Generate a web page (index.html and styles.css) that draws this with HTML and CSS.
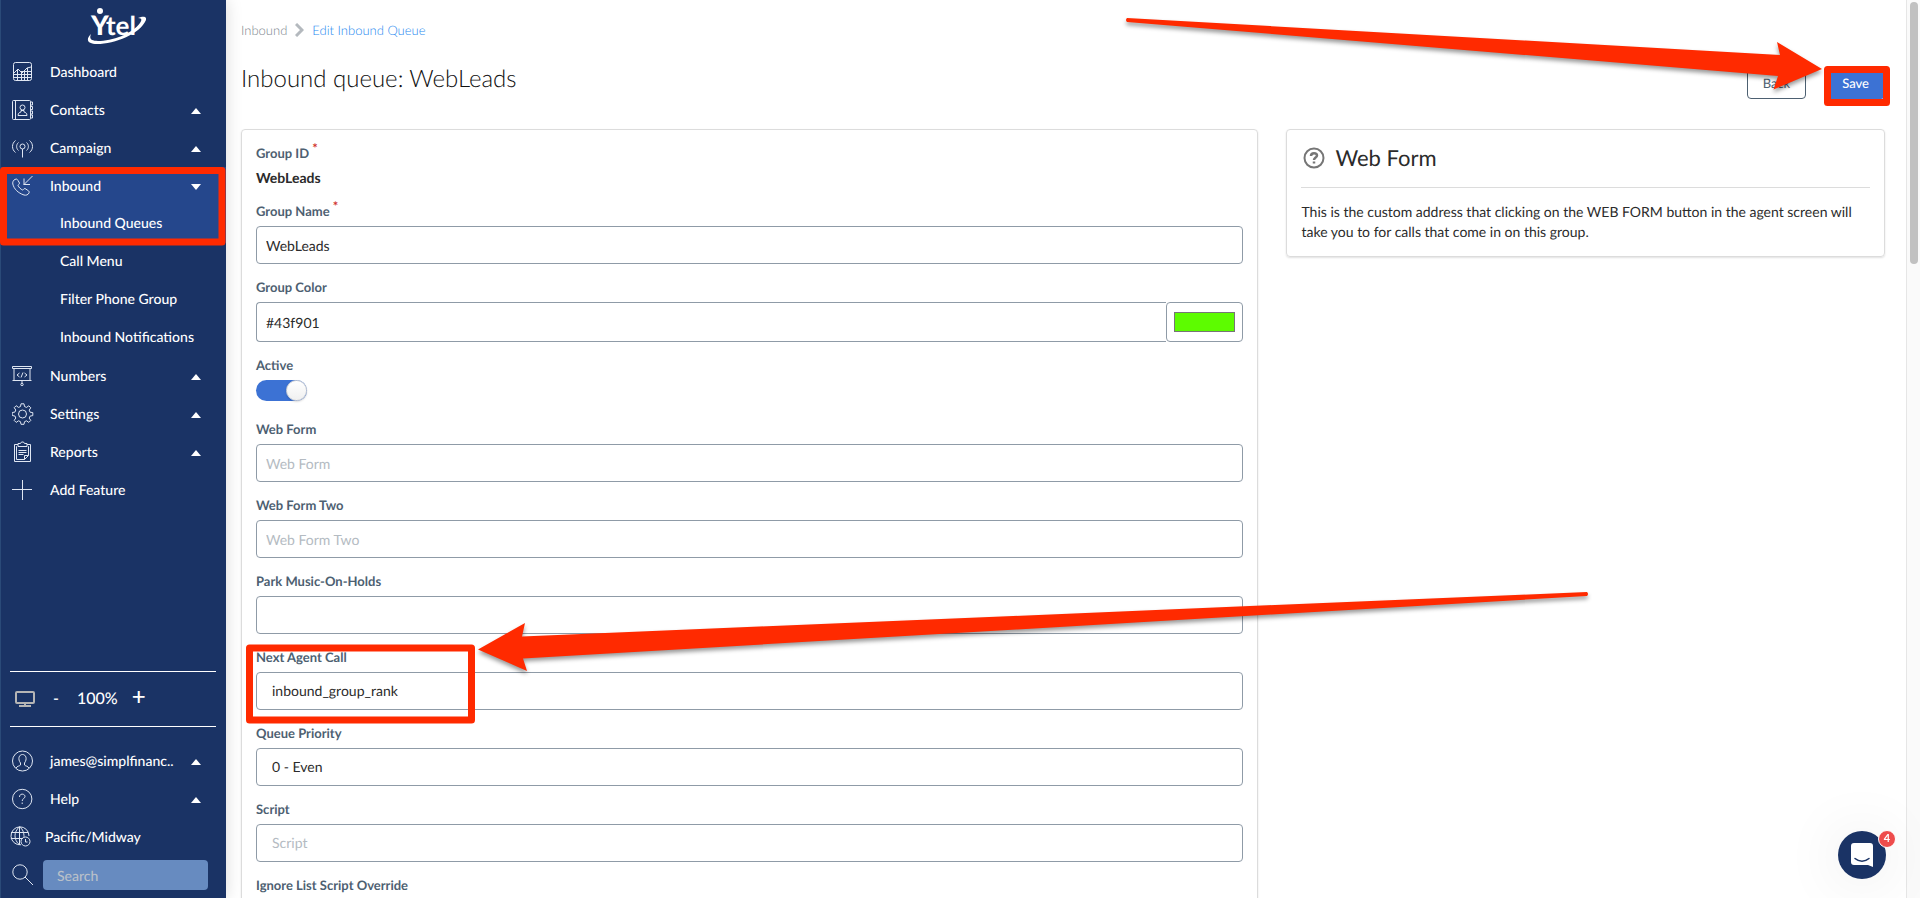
FILE: index.html
```html
<!DOCTYPE html>
<html lang="en">
<head>
    <meta charset="UTF-8">
    <meta name="viewport" content="width=device-width, initial-scale=1.0">
    <title>Edit Inbound Queue</title>
    <link rel="stylesheet" href="styles.css">
</head>
<body>
    <div class="layout">
        <aside class="sidebar">
            <a href="#" class="logo">
                <svg width="60" height="40" viewBox="0 0 60 40" fill="#fff" role="img" aria-label="Ytel">
                    <circle cx="14" cy="5" r="3"/>
                    <text x="5" y="29" font-size="27" font-weight="900">Y</text>
                    <text x="20" y="29" font-size="26" font-weight="700">tel</text>
                    <path d="M5 28c-6 6-3 10 6 10 18 0 43-10 49-24 1-3-2-4-5-3l-3 1c4 0 4 2 2 5-8 11-28 18-42 18-7 0-9-2-7-7z"/>
                </svg>
            </a>
            <nav class="menu">
                <a href="#" class="item">
                    <svg class="icon" viewBox="0 0 22 22"><rect x="1.500" y="1.500" width="18" height="18" rx="2"/><path d="M2 12l4-4 4 4 5-5 4-1M2 13.500h17M2 16.500h17M5.500 9v10M9.500 12v7M12.500 10v9M15.500 7v12M9 10.500h10"/></svg>
                    <span>Dashboard</span>
                </a>
                <a href="#" class="item">
                    <svg class="icon" viewBox="0 0 22 22"><rect x=".5" y="1.500" width="18" height="19" rx="1"/><path d="M3.500 1.500v19M18.500 3h2v3h-2M18.500 7.500h2v3h-2M18.500 12h2v3h-2M18.500 16h2v3h-2M6 16.500c0-3 2-3 3-3.500v-1.500h3V13c1 .5 3 .5 3 3.500z"/><circle cx="10.500" cy="8.500" r="2.500"/></svg>
                    <span>Contacts</span>
                    <i class="caret"></i>
                </a>
                <a href="#" class="item">
                    <svg class="icon" viewBox="0 0 22 22"><circle cx="10.500" cy="9.500" r="2.500"/><path d="M10.500 12v8.500M6.500 5.500c-2.500 2-2.500 6 0 8M14.500 5.500c2.500 2 2.500 6 0 8M3.500 3.500c-4 3-4 9 0 12M17.500 3.500c4 3 4 9 0 12"/></svg>
                    <span>Campaign</span>
                    <i class="caret"></i>
                </a>
                <div class="group">
                    <a href="#" class="item">
                        <svg class="icon" viewBox="0 0 22 22"><path d="M20.500 1l-9 9M12 3.500V9.500h6M2 5l2-1c1 0 1.500.5 2 1.500l1.500 2.500c0 1.500-1.500 1.500-1.500 2.500 1 2 2.500 3.500 4.500 4.500 1 0 1-1.500 2.500-1.500l3 2c1 .5 1.500 1.500 1 2.500-1 2-3 2.500-5 2C6 18 2 14 .8 9 .5 7.500 1 6 2 5z"/></svg>
                        <span>Inbound</span>
                        <i class="caret down"></i>
                    </a>
                    <a href="#" class="item sub">Inbound Queues</a>
                </div>
                <a href="#" class="item sub">Call Menu</a>
                <a href="#" class="item sub">Filter Phone Group</a>
                <a href="#" class="item sub">Inbound Notifications</a>
                <a href="#" class="item">
                    <svg class="icon" viewBox="0 0 22 22"><path d="M.5 1.500h19v2H.5zM2 3.500v12M18 3.500v12M.5 15.500h19M10 15.500v3M7.500 8L5 10l2.500 2M12.500 8L15 10l-2.500 2M11 7.500l-2 5"/><circle cx="10" cy="19.500" r="1.200"/></svg>
                    <span>Numbers</span>
                    <i class="caret"></i>
                </a>
                <a href="#" class="item">
                    <svg class="icon" viewBox="0 0 22 22"><circle cx="10.500" cy="11" r="4"/><path d="M9 .8h3l.5 2.700 2 .9 2.300-1.600 2 2-1.600 2.300.9 2.100 2.700.4v3l-2.700.5-.9 2 1.600 2.300-2 2-2.300-1.600-2 .9-.5 2.600H9l-.5-2.600-2-.9-2.300 1.600-2-2L3.800 15l-.9-2-2.700-.5v-3l2.700-.4.9-2.100-1.600-2.300 2-2L6.500 4.400l2-.9z"/></svg>
                    <span>Settings</span>
                    <i class="caret"></i>
                </a>
                <a href="#" class="item">
                    <svg class="icon" viewBox="0 0 22 22"><path d="M6 3.500H2.500v17h16v-17H15M5 5.500h-.5v13h8l4-4v-9H16M12.500 18.500v-4h4M6.500 9.500h8M6.500 11.500h8M6.500 13.500h5M6 5.500v-3h2.500l1-1.500h2l1 1.500H15v3z"/></svg>
                    <span>Reports</span>
                    <i class="caret"></i>
                </a>
                <a href="#" class="item">
                    <svg class="icon" viewBox="0 0 22 22"><path d="M10.500 1v20M0 10.500h20"/></svg>
                    <span>Add Feature</span>
                </a>
            </nav>
            <div class="zoom">
                <svg width="20" height="18" viewBox="0 0 20 18" fill="none" stroke="#b5b5b5" stroke-width="2"><rect x="1" y="2" width="18" height="11" rx="1"/><path d="M10 13v3M4 16h12"/></svg>
                <button type="button" class="zoom-out" aria-label="Zoom out">-</button>
                <span class="zoom-value">100%</span>
                <button type="button" class="zoom-in" aria-label="Zoom in">+</button>
            </div>
            <nav class="account">
                <a href="#" class="item">
                    <svg class="icon" viewBox="0 0 22 22"><circle cx="10.500" cy="11" r="10"/><path d="M4 18c1-2 4-2 4.500-3v-2C5.500 9 7 4.500 10.500 4.500S15.500 9 12.500 13v2c.5 1 3.500 1 4.500 3"/></svg>
                    <span>james@simplfinanc..</span>
                    <i class="caret"></i>
                </a>
                <a href="#" class="item">
                    <svg class="icon" viewBox="0 0 22 22"><circle cx="10.200" cy="11" r="9.700"/><path d="M7.500 9c0-4 5.500-3.500 5.500-.5 0 2-2.800 2-2.800 4.500M10.200 14.500v1.500"/></svg>
                    <span>Help</span>
                    <i class="caret"></i>
                </a>
                <a href="#" class="item timezone">
                    <svg class="icon" viewBox="0 0 22 22"><path d="M19 10A9 9 0 1 0 11 18.800M1 6.500h17M.8 12.500h12M9.500.8v18M9.500.8c-6 5-6 13 0 18M9.500.8c3.500 2.500 4.500 6 4.500 10"/><circle cx="15.500" cy="15.500" r="4.500"/><path d="M15.500 13v3h2"/></svg>
                    <span>Pacific/Midway</span>
                </a>
                <div class="search">
                    <svg class="icon" viewBox="0 0 22 22"><circle cx="8" cy="8" r="7.200"/><path d="M13 13l8 8"/></svg>
                    <input type="text" placeholder="Search" aria-label="Search">
                </div>
            </nav>
        </aside>

        <main class="content">
            <nav class="breadcrumb">
                <a href="#">Inbound</a>
                <svg width="9" height="14" viewBox="0 0 9 14" fill="none" stroke="#b4b9be" stroke-width="3"><path d="M1 1l6 6-6 6"/></svg>
                <a href="#" class="current">Edit Inbound Queue</a>
            </nav>
            <div class="page-head">
                <h1>Inbound queue: WebLeads</h1>
                <div class="actions">
                    <button type="button" class="btn">Back</button>
                    <button type="submit" form="queueForm" class="btn primary">Save</button>
                </div>
            </div>

            <div class="columns">
                <form id="queueForm" class="card">
                    <div class="field">
                        <span class="label">Group ID <sup>*</sup></span>
                        <strong class="value">WebLeads</strong>
                    </div>
                    <div class="field">
                        <label for="groupName">Group Name <sup>*</sup></label>
                        <input type="text" id="groupName" value="WebLeads">
                    </div>
                    <div class="field">
                        <label for="groupColor">Group Color</label>
                        <div class="color-row">
                            <input type="text" id="groupColor" value="#43f901">
                            <input type="color" value="#5dfc00" aria-label="Pick group color">
                        </div>
                    </div>
                    <div class="field">
                        <label for="active">Active</label>
                        <div class="toggle-row">
                            <input type="checkbox" id="active" class="toggle" checked>
                        </div>
                    </div>
                    <div class="field">
                        <label for="webForm">Web Form</label>
                        <input type="text" id="webForm" placeholder="Web Form">
                    </div>
                    <div class="field">
                        <label for="webFormTwo">Web Form Two</label>
                        <input type="text" id="webFormTwo" placeholder="Web Form Two">
                    </div>
                    <div class="field">
                        <label for="parkMusic">Park Music-On-Holds</label>
                        <input type="text" id="parkMusic">
                    </div>
                    <div class="field">
                        <label for="nextAgent">Next Agent Call</label>
                        <select id="nextAgent">
                            <option>inbound_group_rank</option>
                        </select>
                    </div>
                    <div class="field">
                        <label for="priority">Queue Priority</label>
                        <select id="priority">
                            <option>0 - Even</option>
                        </select>
                    </div>
                    <div class="field">
                        <label for="script">Script</label>
                        <select id="script" class="empty">
                            <option value="">Script</option>
                        </select>
                    </div>
                    <div class="field">
                        <label for="ignoreScript">Ignore List Script Override</label>
                        <div class="toggle-row">
                            <input type="checkbox" id="ignoreScript" class="toggle">
                        </div>
                    </div>
                </form>

                <section class="card help">
                    <h2>
                        <svg width="22" height="22" viewBox="0 0 22 22" fill="none" stroke="#767676" stroke-width="2"><circle cx="11" cy="11" r="9.500"/><path d="M8 9c0-4 6-3.500 6-.5 0 2-3 2-3 4.500M11 14.500v2" stroke-width="2.500"/></svg>
                        Web Form
                    </h2>
                    <p>This is the custom address that clicking on the WEB FORM button in the agent screen will take you to for calls that come in on this group.</p>
                </section>
            </div>
        </main>

        <div class="scroll-rail"><div class="scroll-thumb"></div></div>
    </div>

    <button type="button" class="chat" aria-label="Open chat">
        <svg width="22" height="24" viewBox="0 0 22 24"><path d="M3 0h16a3 3 0 0 1 3 3v21l-5-2H3a3 3 0 0 1-3-3V3a3 3 0 0 1 3-3z" fill="#fff"/><path d="M4 15.500c4 3.500 10 3.500 14 0" fill="none" stroke="#1a3365" stroke-width="1.500" stroke-linecap="round"/></svg>
        <span class="count">4</span>
    </button>

    <!-- callouts drawn over the page -->
    <svg class="callouts" viewBox="0 0 1920 898" aria-hidden="true">
        <g fill="none" stroke="#ff2a00" stroke-width="7" stroke-linejoin="round">
            <rect x="3.500" y="170.500" width="218.500" height="71.500"/>
            <rect x="249.500" y="648" width="222" height="72"/>
            <rect x="1827.500" y="69.500" width="59" height="33"/>
        </g>
        <g class="arrows" fill="#ff2a00">
            <path d="M1127 18L1780 55l-3-13 45 27-48.500 20.500 4.500-13.500L1127 22q-2-2 0-4z"/>
            <path d="M1587 592L522 636.500l3-13.500-47 26.500 49 21.500-4-12.500L1587 596q2-2 0-4z"/>
        </g>
    </svg>
</body>
</html>
```
FILE: styles.css
```css
* {
    box-sizing: border-box;
}
body {
    margin: 0;
    font-family: Lato, sans-serif;
    font-size: 14px;
    line-height: 20px;
    text-rendering: geometricPrecision;
    color: #2b2b2b;
    background: #fff;
}
a {
    color: inherit;
    text-decoration: none;
}
input, select, button {
    font: inherit;
    color: inherit;
    text-rendering: inherit;
}
.layout {
    display: flex;
    height: 100vh;
    overflow: hidden;
}

/* sidebar */
.sidebar {
    display: flex;
    flex-direction: column;
    flex: none;
    width: 226px;
    padding-bottom: 4px;
    background: #1a3365;
    border-left: 1px solid #2a4a78;
    box-shadow: 0 0 16px rgba(0, 0, 0, 0.15);
    color: #fff;
    font-weight: 500;
}
.logo {
    display: flex;
    justify-content: center;
    height: 53px;
    padding: 6px 0 0 4px;
}
.item {
    display: flex;
    align-items: center;
    gap: 16px;
    height: 38px;
    padding: 0 25px 0 11px;
}
.item.sub {
    padding: 0 25px 2px 59px;
}
.item.timezone {
    gap: 13px;
    padding-left: 9px;
}
.group {
    background: #25478c;
}
.icon {
    flex: none;
    width: 22px;
    height: 22px;
    fill: none;
    stroke: #dfe6f2;
    stroke-width: 1;
}
.caret {
    margin: 2px 0 0 auto;
    border: 5px solid transparent;
    border-top: 0;
    border-bottom: 6px solid #fff;
}
.caret.down {
    border-top: 6px solid #fff;
    border-bottom: 0;
}
.zoom {
    display: flex;
    align-items: center;
    height: 56px;
    margin: auto 10px 15px 9px;
    padding-left: 5px;
    border-top: 1px solid #fff;
    border-bottom: 1px solid #fff;
    font-size: 16px;
}
.zoom button {
    padding: 0;
    border: 0;
    background: none;
    cursor: pointer;
}
.zoom-out {
    width: 42px;
}
.zoom .zoom-in {
    width: 42px;
    padding-bottom: 4px;
    font-size: 24px;
}
.search {
    display: flex;
    align-items: center;
    gap: 9px;
    height: 38px;
    padding: 0 18px 0 11px;
}
.search input {
    flex: 1;
    min-width: 0;
    height: 30px;
    padding: 0 14px;
    border: 0;
    border-radius: 4px;
    background: #678bc0;
}
.search input::placeholder {
    color: #b9c0c9;
}

/* page */
.content {
    flex: 1;
    min-width: 0;
    padding: 20px 21px 0 15px;
    overflow-y: auto;
    scrollbar-width: none;
}
.breadcrumb {
    display: flex;
    align-items: center;
    gap: 8px;
    color: #7d868e;
    font-size: 13px;
    font-weight: 300;
}
.breadcrumb .current {
    color: #1e88f0;
}
.page-head {
    display: flex;
    align-items: center;
    justify-content: space-between;
    height: 50px;
    margin: 15px 0 24px;
}
h1 {
    margin: 0 0 2px;
    color: #111;
    font-size: 24px;
    font-weight: 300;
    line-height: 30px;
}
.actions {
    display: flex;
    gap: 20px;
    padding-top: 6px;
}
.btn {
    height: 32px;
    padding: 0 15px;
    border: 1px solid #4d6071;
    border-radius: 4px;
    background: #fff;
    color: #4d6071;
    font-size: 13px;
    cursor: pointer;
}
.btn.primary {
    border-color: #3c72d4;
    background: #3c72d4;
    color: #fff;
    font-weight: 500;
}
.columns {
    display: grid;
    grid-template-columns: 17fr 10fr;
    align-items: start;
    gap: 28px;
}
.card {
    padding: 14px;
    border: 1px solid #dcdcdc;
    border-radius: 4px;
    box-shadow: 0 1px 2px rgba(0, 0, 0, 0.12);
}
.field {
    margin-bottom: 14px;
}
label, .label {
    display: block;
    margin-bottom: 6px;
    color: #4d6071;
    font-size: 13px;
    font-weight: 700;
    line-height: 18px;
}
sup {
    color: #d0342c;
    font-size: 13px;
    line-height: 0;
}
.value {
    display: block;
}
.field input[type="text"], .field select {
    display: block;
    width: 100%;
    height: 38px;
    padding: 0 9px;
    border: 1px solid #8f9ba7;
    border-radius: 4px;
    background: #fff;
}
.field select {
    appearance: none;
    padding: 0 15px;
}
.field input::placeholder, .field select.empty {
    color: #b4bbc2;
}
.color-row {
    display: flex;
}
.field .color-row input[type="text"] {
    height: 40px;
    border-right: 0;
    border-radius: 4px 0 0 4px;
}
input[type="color"] {
    flex: none;
    width: 77px;
    height: 40px;
    padding: 9px 7px;
    border: 1px solid #8f9ba7;
    border-radius: 4px;
    background: #fff;
}
input[type="color"]::-webkit-color-swatch-wrapper {
    padding: 0;
}
input[type="color"]::-webkit-color-swatch {
    border: 1px solid #767676;
    border-radius: 0;
}
.toggle-row {
    height: 26px;
}
.toggle {
    appearance: none;
    display: flex;
    width: 51px;
    height: 21px;
    margin: 0;
    border-radius: 11px;
    background: #d5d9de;
}
.toggle::before {
    content: "";
    width: 21px;
    height: 21px;
    box-sizing: border-box;
    border: 1px solid #d4d4d5;
    border-radius: 50%;
    background: linear-gradient(#fff, #f0f0f0);
    box-shadow: 0 1px 2px rgba(0, 0, 0, 0.15);
}
.toggle:checked {
    justify-content: flex-end;
    background: #3c72d4;
}
.help h2 {
    display: flex;
    align-items: center;
    gap: 10px;
    margin: 0 0 14px;
    padding: 0 2px 15px;
    border-bottom: 1px solid #dcdcdc;
    font-size: 22px;
    font-weight: 400;
    line-height: 28px;
}
.help p {
    margin: 0;
}
.scroll-rail {
    flex: none;
    width: 14px;
    padding: 2px 2px 0 3px;
    border-left: 1px solid #e6e6e6;
    background: #fafafa;
}
.scroll-thumb {
    height: 262px;
    border-radius: 4px;
    background: #c1c1c1;
}

/* chat launcher */
.chat {
    position: fixed;
    right: 34px;
    bottom: 19px;
    display: flex;
    align-items: center;
    justify-content: center;
    width: 48px;
    height: 48px;
    padding: 0;
    border: 0;
    border-radius: 50%;
    background: #1a3365;
    box-shadow: 0 2px 60px rgba(0, 0, 0, 0.1);
    cursor: pointer;
}
.count {
    position: absolute;
    top: -1px;
    right: -10px;
    width: 18px;
    height: 18px;
    border: 1px solid #fff;
    border-radius: 50%;
    background: #ee4c4c;
    color: #fff;
    font-size: 11px;
    font-weight: 700;
    line-height: 16px;
}
.callouts {
    position: absolute;
    top: 0;
    left: 0;
    width: 100%;
    pointer-events: none;
}
.arrows {
    filter: drop-shadow(0 3px 2px rgba(0, 0, 0, 0.4));
}
```
